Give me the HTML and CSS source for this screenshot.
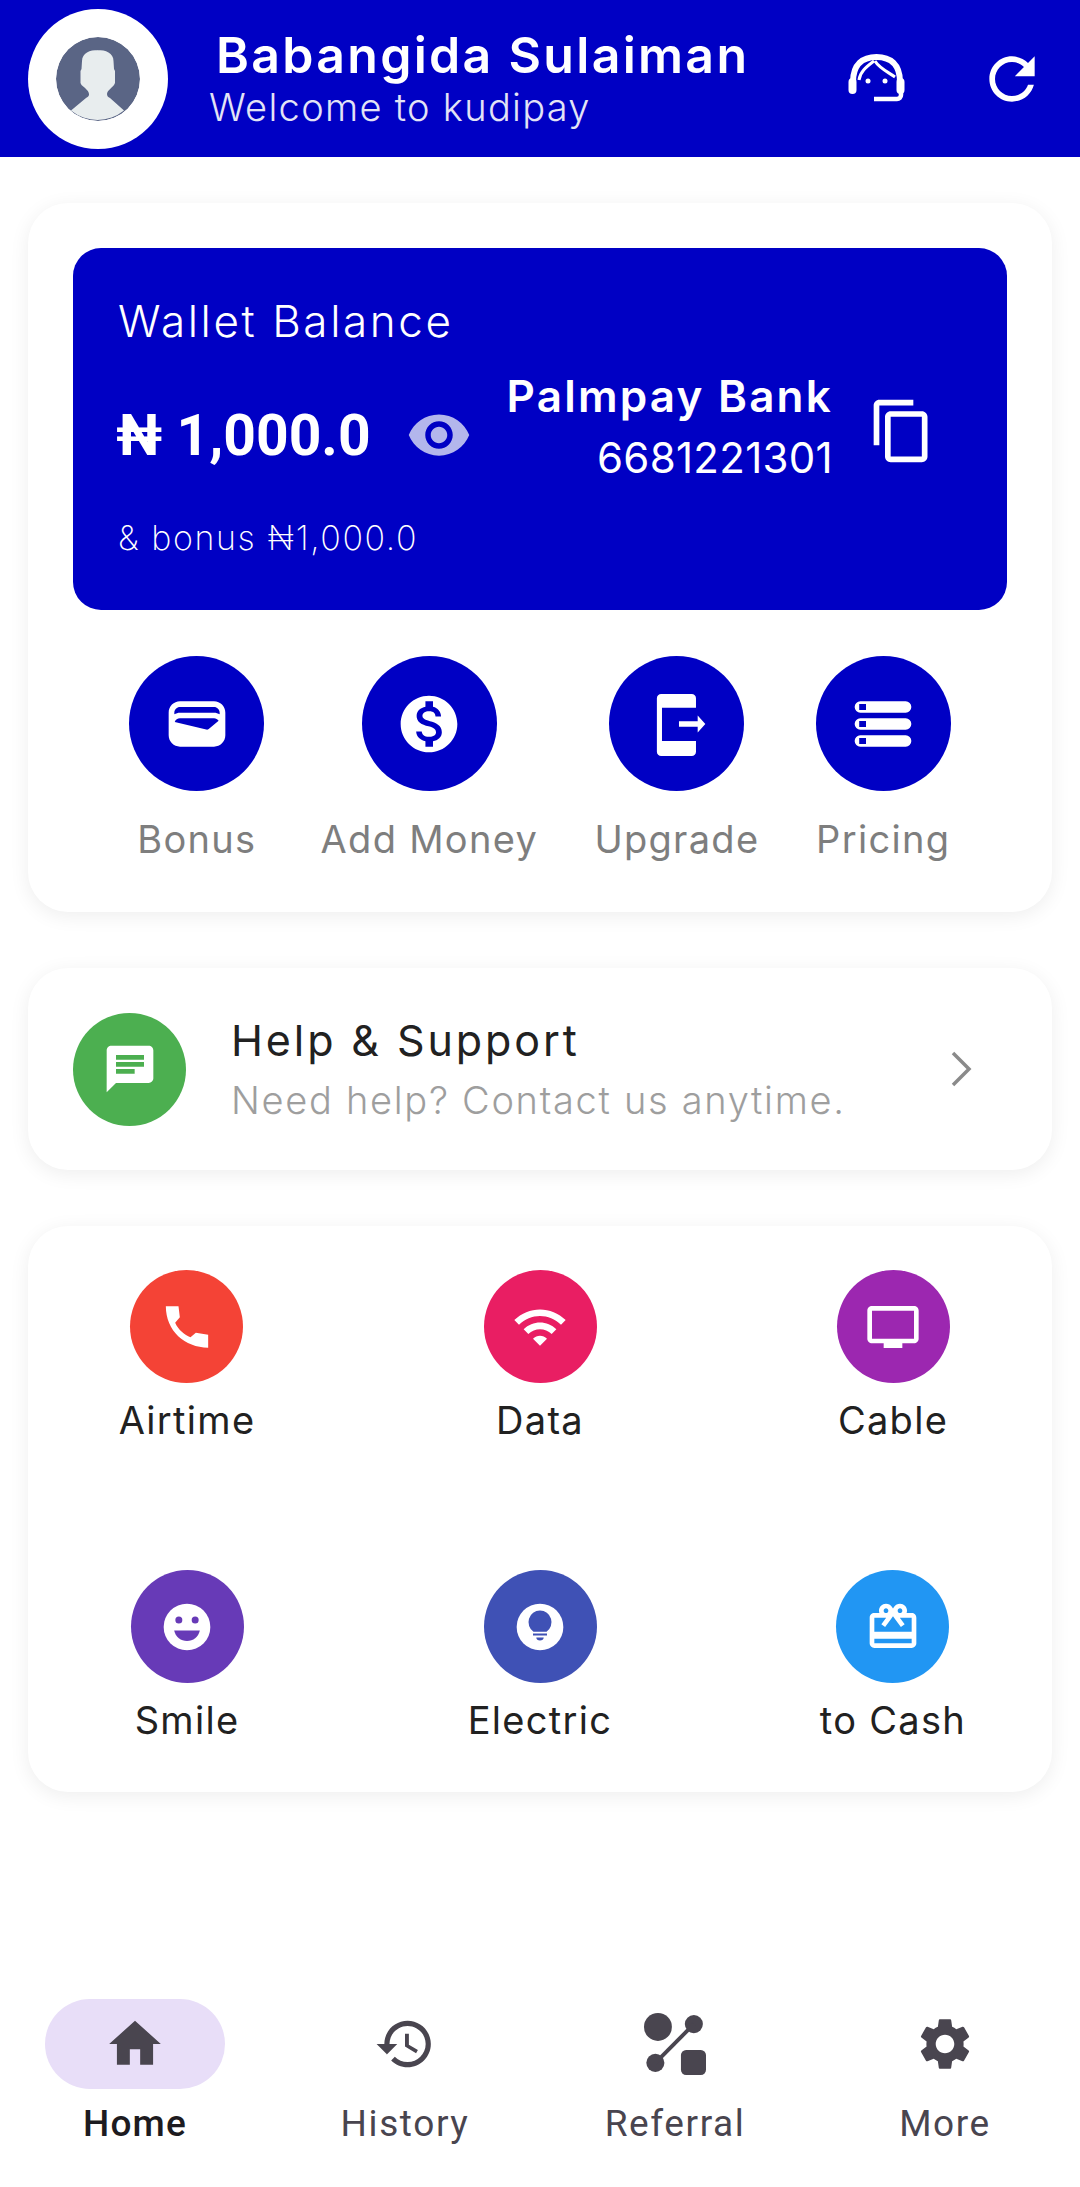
FILE: index.html
```html
<!DOCTYPE html>
<html lang="en">
<head>
    <meta charset="UTF-8">
    <meta name="viewport" content="width=device-width, initial-scale=1.0">
    <title>Kudipay</title>
    <link rel="stylesheet" href="styles.css">
</head>
<body>
    <header class="topbar">
        <div class="avatar">
            <svg viewBox="0 0 84 84" width="84" height="84">
                <circle cx="42" cy="42" r="42" fill="#5a6585"/>
                <path d="M42 13c-8 0-16 3-16 11l-.5 8-1 2v12l1 2c3 3 7 5 7.500 9 .3 2-1 3-3 4L15 73.500A42 42 0 0 0 68 73.500L54 61c-2-1-3-2-3-4 .5-4 5-6 7-9l1-2V34l-1-2-.5-8c0-8-8-11-16-11z" fill="#e8edee"/>
            </svg>
        </div>
        <div class="topbar-text">
            <div class="user-name">Babangida Sulaiman</div>
            <div class="welcome">Welcome to kudipay</div>
        </div>
        <svg class="top-icon agent" viewBox="0 0 100 80" fill="none" stroke="#fff">
            <path d="M23 42C23 24 33 17 46.500 17S70 24 70 42" stroke-width="6"/>
            <path d="M29 40C30 32 36 27 44 21M45 21C49 28 58 32 65 37" stroke-width="3"/>
            <rect x="18.500" y="38" width="8" height="16" rx="4" fill="#fff" stroke="none"/>
            <rect x="66.500" y="38" width="8" height="16" rx="4" fill="#fff" stroke="none"/>
            <path d="M71 52v3a4 4 0 0 1-4 4H44" stroke-width="4.500"/>
            <circle cx="38" cy="41" r="2.500" fill="#fff" stroke="none"/>
            <circle cx="55" cy="41" r="2.500" fill="#fff" stroke="none"/>
        </svg>
        <svg class="top-icon refresh" viewBox="0 0 24 24" fill="#fff"><path d="M17.650 6.350C16.200 4.900 14.210 4 12 4c-4.420 0-7.990 3.580-7.990 8s3.570 8 7.990 8c3.730 0 6.840-2.550 7.730-6h-2.080c-.82 2.330-3.040 4-5.650 4-3.310 0-6-2.690-6-6s2.690-6 6-6c1.660 0 3.140.69 4.220 1.780L13 11h7V4l-2.350 2.350z"/></svg>
    </header>

    <section class="card main-card">
        <div class="wallet">
            <div class="wallet-title">Wallet Balance</div>
            <div class="wallet-row">
                <div class="balance">₦ 1,000.0</div>
                <svg class="eye" viewBox="0 0 24 24" fill="#b3b6ec"><path d="M12 4.500C7 4.500 2.730 7.610 1 12c1.730 4.390 6 7.500 11 7.500s9.270-3.110 11-7.500c-1.730-4.390-6-7.500-11-7.500zM12 17c-2.760 0-5-2.240-5-5s2.240-5 5-5 5 2.240 5 5-2.240 5-5 5zm0-8c-1.660 0-3 1.340-3 3s1.340 3 3 3 3-1.340 3-3-1.340-3-3-3z"/></svg>
                <div class="bank">
                    <div class="bank-name">Palmpay Bank</div>
                    <div class="bank-number">6681221301</div>
                </div>
                <svg class="copy" viewBox="0 0 24 24" fill="#fff"><path d="M16 1H4c-1.100 0-2 .9-2 2v14h2V3h12V1zm3 4H8c-1.100 0-2 .9-2 2v14c0 1.100.9 2 2 2h11c1.100 0 2-.9 2-2V7c0-1.100-.9-2-2-2zm0 16H8V7h11v14z"/></svg>
            </div>
            <div class="wallet-bonus">&amp; bonus ₦1,000.0</div>
        </div>
        <div class="actions">
            <div class="action">
                <div class="action-circle"><svg viewBox="0 0 24 24" fill="#fff"><path d="M18 4H6C3.790 4 2 5.790 2 8v8c0 2.210 1.790 4 4 4h12c2.210 0 4-1.790 4-4V8c0-2.210-1.790-4-4-4zm-1.860 9.770c-.24.2-.57.28-.88.2L4.150 11.250C4.450 10.520 5.160 10 6 10h12c.67 0 1.260.34 1.630.84l-3.490 2.930zM6 6h12c1.100 0 2 .9 2 2v.55C19.410 8.210 18.730 8 18 8H6c-.73 0-1.410.21-2 .55V8c0-1.100.9-2 2-2z"/></svg></div>
                <span>Bonus</span>
            </div>
            <div class="action">
                <div class="action-circle"><svg viewBox="0 0 24 24" fill="#fff"><path d="M12 2C6.480 2 2 6.480 2 12s4.480 10 10 10 10-4.480 10-10S17.520 2 12 2zm1.410 16.090V20h-2.670v-1.930c-1.710-.36-3.160-1.460-3.270-3.400h1.960c.1 1.050.82 1.870 2.650 1.870 1.960 0 2.400-.98 2.400-1.590 0-.83-.44-1.610-2.670-2.140-2.480-.6-4.180-1.620-4.180-3.670 0-1.720 1.390-2.840 3.110-3.210V4h2.670v1.950c1.860.45 2.790 1.860 2.850 3.390H14.300c-.05-1.110-.64-1.870-2.220-1.870-1.500 0-2.400.68-2.400 1.640 0 .84.65 1.390 2.670 1.910s4.180 1.390 4.180 3.910c-.01 1.830-1.380 2.830-3.120 3.160z"/></svg></div>
                <span>Add Money</span>
            </div>
            <div class="action">
                <div class="action-circle"><svg viewBox="0 0 24 24" fill="#fff"><path d="M6.400 1.400h10.800a1.500 1.500 0 0 1 1.500 1.500v3.400H6.700V18h12v3.800a1.500 1.500 0 0 1-1.500 1.500H6.400a1.500 1.500 0 0 1-1.500-1.500V2.900a1.500 1.500 0 0 1 1.500-1.500z"/><path d="M12.700 11h6.600V9l2.700 3-2.700 3v-2h-6.600z"/></svg></div>
                <span>Upgrade</span>
            </div>
            <div class="action">
                <div class="action-circle"><svg viewBox="0 0 24 24" fill="#fff"><path fill-rule="evenodd" d="M4 4h16a2 2 0 0 1 0 4H4a2 2 0 0 1 0-4zM3.600 4.950v2.100H6v-2.100zM4 10h16a2 2 0 0 1 0 4H4a2 2 0 0 1 0-4zM3.600 10.950v2.100H6v-2.100zM4 16h16a2 2 0 0 1 0 4H4a2 2 0 0 1 0-4zM3.600 16.950v2.100H6v-2.100z"/></svg></div>
                <span>Pricing</span>
            </div>
        </div>
    </section>

    <section class="card help-card">
        <div class="help-icon"><svg viewBox="0 0 24 24" fill="#fff"><path d="M20 2H4c-1.100 0-1.990.9-1.990 2L2 22l4-4h14c1.100 0 2-.9 2-2V4c0-1.100-.9-2-2-2zm-6 12H6v-2h8v2zm4-3H6V9h12v2zm0-3H6V6h12v2z"/></svg></div>
        <div class="help-text">
            <div class="help-title">Help &amp; Support</div>
            <div class="help-sub">Need help? Contact us anytime.</div>
        </div>
        <svg class="chevron" viewBox="0 0 24 36" fill="none" stroke="#8a8a8a" stroke-width="3.500"><path d="M3 2l16 16L3 34"/></svg>
    </section>

    <section class="card services">
        <div class="service">
            <div class="service-circle red"><svg viewBox="87.500 86 168 168" fill="#fff"><path d="M108 108h38l4 33-14 16c10 22 28 36 46 44l16-14 37 6v39c-70 0-127-50-127-124z"/></svg></div>
            <span>Airtime</span>
        </div>
        <div class="service">
            <div class="service-circle pink"><svg viewBox="0 0 24 24" fill="#fff"><path d="M1 9l2 2c4.970-4.970 13.030-4.970 18 0l2-2C16.930 2.930 7.080 2.930 1 9zm8 8l3 3 3-3c-1.650-1.660-4.340-1.660-6 0zm-4-4l2 2c2.760-2.760 7.240-2.760 10 0l2-2C15.140 9.140 8.870 9.140 5 13z"/></svg></div>
            <span>Data</span>
        </div>
        <div class="service">
            <div class="service-circle purple"><svg viewBox="0 0 24 24" fill="#fff"><path d="M21 3H3c-1.100 0-2 .9-2 2v12c0 1.100.9 2 2 2h5v2h8v-2h5c1.100 0 1.990-.9 1.990-2L23 5c0-1.100-.9-2-2-2zm0 14H3V5h18v12z"/></svg></div>
            <span>Cable</span>
        </div>
        <div class="service">
            <div class="service-circle violet"><svg viewBox="0 0 24 24"><circle cx="12" cy="12" r="10" fill="#fff"/><circle cx="8.500" cy="9" r="1.500" fill="#673ab7"/><circle cx="15.500" cy="9" r="1.500" fill="#673ab7"/><path d="M6.500 13.500h11c-.6 2.800-2.900 4.500-5.500 4.500s-4.900-1.700-5.500-4.500z" fill="#673ab7"/></svg></div>
            <span>Smile</span>
        </div>
        <div class="service">
            <div class="service-circle indigo"><svg viewBox="0 0 24 24"><circle cx="12" cy="12" r="10" fill="#fff"/><path d="M12 4.900a5 5 0 0 0-2.800 9.100h5.600A5 5 0 0 0 12 4.900z" fill="#3f51b5"/><path d="M9 14.800h6v.8H9zM10.400 16.500h3.200c0 .8-.7 1.300-1.600 1.300s-1.600-.5-1.600-1.300z" fill="#3f51b5"/></svg></div>
            <span>Electric</span>
        </div>
        <div class="service">
            <div class="service-circle blue"><svg viewBox="0 0 24 24" fill="#fff"><path d="M20 6h-2.180c.11-.31.18-.65.18-1 0-1.660-1.340-3-3-3-1.050 0-1.960.54-2.500 1.350l-.5.67-.5-.68C10.960 2.540 10.050 2 9 2 7.340 2 6 3.340 6 5c0 .35.07.69.18 1H4c-1.110 0-1.990.89-1.990 2L2 19c0 1.110.89 2 2 2h16c1.110 0 2-.89 2-2V8c0-1.110-.89-2-2-2zm-5-2c.55 0 1 .45 1 1s-.45 1-1 1-1-.45-1-1 .45-1 1-1zM9 4c.55 0 1 .45 1 1s-.45 1-1 1-1-.45-1-1 .45-1 1-1zm11 15H4v-2h16v2zm0-5H4V8h5.080L7 10.830 8.620 12 11 8.760l1-1.360 1 1.360L15.380 12 17 10.830 14.920 8H20v6z"/></svg></div>
            <span>to Cash</span>
        </div>
    </section>

    <nav class="bottom-nav">
        <div class="nav-item active">
            <div class="nav-pill"><svg viewBox="0 0 24 24"><path d="M10 20v-6h4v6h5v-8h3L12 3 2 12h3v8z"/></svg></div>
            <span>Home</span>
        </div>
        <div class="nav-item">
            <div class="nav-pill"><svg viewBox="0 0 24 24"><path d="M13 3c-4.970 0-9 4.030-9 9H1l3.890 3.890.07.14L9 12H6c0-3.870 3.130-7 7-7s7 3.130 7 7-3.130 7-7 7c-1.930 0-3.680-.79-4.940-2.060l-1.420 1.420C8.270 19.990 10.510 21 13 21c4.970 0 9-4.030 9-9s-4.030-9-9-9zm-1 5v5l4.280 2.540.72-1.210-3.500-2.080V8H12z"/></svg></div>
            <span>History</span>
        </div>
        <div class="nav-item">
            <div class="nav-pill"><svg viewBox="0 0 24 24"><circle cx="5.400" cy="5.400" r="5.400"/><circle cx="19.300" cy="4.300" r="3.500"/><circle cx="4.400" cy="19.300" r="3.500"/><rect x="14.300" y="14.300" width="9.700" height="9.700" rx="2"/><path d="M4.400 19.300L19.300 4.300" stroke="#49454f" stroke-width="1.500"/></svg></div>
            <span>Referral</span>
        </div>
        <div class="nav-item">
            <div class="nav-pill"><svg viewBox="0 0 24 24"><path d="M19.140 12.940c.04-.3.06-.61.06-.94 0-.32-.02-.64-.07-.94l2.030-1.580c.18-.14.23-.41.12-.61l-1.920-3.320c-.12-.22-.37-.29-.59-.22l-2.390.96c-.5-.38-1.030-.7-1.620-.94l-.36-2.540c-.04-.24-.24-.41-.48-.41h-3.840c-.24 0-.43.17-.47.41l-.36 2.540c-.59.24-1.130.57-1.620.94l-2.390-.96c-.22-.08-.47 0-.59.22L2.740 8.870c-.12.21-.08.47.12.61l2.030 1.580c-.05.3-.09.63-.09.94s.02.64.07.94l-2.030 1.580c-.18.14-.23.41-.12.61l1.920 3.320c.12.22.37.29.59.22l2.390-.96c.5.38 1.030.7 1.620.94l.36 2.540c.05.24.24.41.48.41h3.840c.24 0 .44-.17.47-.41l.36-2.540c.59-.24 1.130-.56 1.620-.94l2.390.96c.22.08.47 0 .59-.22l1.920-3.320c.12-.22.07-.47-.12-.61l-2.010-1.580zM12 15.600c-1.980 0-3.600-1.620-3.600-3.600s1.620-3.600 3.600-3.600 3.600 1.620 3.600 3.600-1.620 3.600-3.600 3.600z"/></svg></div>
            <span>More</span>
        </div>
    </nav>
</body>
</html>
```

FILE: styles.css
```css
* {
    box-sizing: border-box;
}

body {
    margin: 0;
    width: 1080px;
    height: 2187px;
    background-color: #fff;
    font-family: "Inter", "Liberation Sans", sans-serif;
    display: flex;
    flex-direction: column;
    overflow: hidden;
}

.topbar {
    height: 157px;
    background-color: #0000c4;
    display: flex;
    align-items: center;
    padding: 0 28px;
    color: #fff;
}

.avatar {
    width: 140px;
    height: 140px;
    border-radius: 50%;
    background-color: #fff;
    display: flex;
    align-items: center;
    justify-content: center;
    flex-shrink: 0;
}

.avatar svg {
    border-radius: 50%;
}

.topbar-text {
    margin-left: 41px;
    flex: 1;
}

.user-name {
    font-size: 50px;
    font-weight: 600;
    line-height: 56px;
    margin-left: 7px;
    letter-spacing: 2.3px;
    white-space: nowrap;
}

.welcome {
    font-size: 38px;
    font-weight: 300;
    line-height: 48px;
    letter-spacing: 1.3px;
    color: #e3e3f6;
    white-space: nowrap;
}

.top-icon {
    flex-shrink: 0;
}

.agent {
    width: 100px;
    height: 80px;
    margin: 3px 48px 0 0;
}

.refresh {
    width: 68px;
    height: 68px;
    margin-right: 6px;
}

.card {
    margin: 0 28px;
    background-color: #fff;
    border-radius: 40px;
    box-shadow: 0 4px 20px rgba(0, 0, 0, 0.07);
}

.main-card {
    margin-top: 46px;
    height: 709px;
    padding: 45px;
}

.wallet {
    height: 362px;
    background-color: #0000c4;
    border-radius: 28px;
    padding: 46px 45px 0;
    color: #fff;
}

.wallet-title {
    font-size: 44px;
    font-weight: 300;
    line-height: 54px;
    letter-spacing: 2.6px;
}

.wallet-row {
    display: flex;
    align-items: center;
    margin-top: 18px;
}

.balance {
    font-family: "Roboto", sans-serif;
    font-size: 57px;
    font-weight: 700;
    width: 290px;
    margin: 14px 0 0 -2px;
    white-space: nowrap;
}

.eye {
    width: 66px;
    height: 66px;
    margin-top: 14px;
}

.bank {
    width: 361px;
    text-align: right;
}

.bank-name {
    font-size: 44px;
    font-weight: 600;
    line-height: 60px;
    letter-spacing: 2.2px;
    white-space: nowrap;
}

.bank-number {
    font-size: 42px;
    font-weight: 400;
    line-height: 64px;
    letter-spacing: 0.3px;
}

.copy {
    width: 68px;
    height: 68px;
    margin: 6px 0 0 35px;
}

.wallet-bonus {
    font-size: 34px;
    font-weight: 200;
    line-height: 44px;
    letter-spacing: 1.6px;
    margin-top: 26px;
}

.actions {
    display: flex;
    justify-content: space-evenly;
    margin-top: 46px;
}

.action {
    display: flex;
    flex-direction: column;
    align-items: center;
    font-size: 38px;
    letter-spacing: 1.3px;
    color: #7e7e7e;
    white-space: nowrap;
}

.action-circle {
    width: 135px;
    height: 135px;
    border-radius: 50%;
    background-color: #0000c4;
    display: flex;
    align-items: center;
    justify-content: center;
    margin-bottom: 25px;
}

.action-circle svg {
    width: 68px;
    height: 68px;
}

.help-card {
    margin-top: 56px;
    height: 202px;
    padding: 0 45px;
    display: flex;
    align-items: center;
}

.help-icon {
    width: 113px;
    height: 113px;
    border-radius: 50%;
    background-color: #4caf50;
    display: flex;
    align-items: center;
    justify-content: center;
    flex-shrink: 0;
}

.help-icon svg {
    width: 56px;
    height: 56px;
}

.help-text {
    margin: 3px 0 0 45px;
    flex: 1;
}

.help-title {
    font-size: 43px;
    font-weight: 400;
    color: #212121;
    line-height: 56px;
    letter-spacing: 2.9px;
    margin-bottom: 3px;
}

.help-sub {
    font-size: 38px;
    font-weight: 300;
    color: #9e9e9e;
    line-height: 58px;
    letter-spacing: 1.7px;
    white-space: nowrap;
}

.chevron {
    width: 24px;
    height: 36px;
    margin-right: 33px;
}

.services {
    margin-top: 56px;
    height: 566px;
    padding: 44px 43px 0;
    display: grid;
    grid-template-columns: repeat(3, 232px);
    grid-auto-rows: 300px;
    justify-content: space-between;
    justify-items: center;
}

.service {
    display: flex;
    flex-direction: column;
    align-items: center;
    font-size: 38px;
    letter-spacing: 1.3px;
    color: #212121;
    white-space: nowrap;
}

.service-circle {
    width: 113px;
    height: 113px;
    border-radius: 50%;
    display: flex;
    align-items: center;
    justify-content: center;
    margin-bottom: 14px;
}

.service-circle svg {
    width: 56px;
    height: 56px;
}

.red { background-color: #f44336; }
.pink { background-color: #e91e63; }
.purple { background-color: #9c27b0; }
.violet { background-color: #673ab7; }
.indigo { background-color: #3f51b5; }
.blue { background-color: #2196f3; }

.bottom-nav {
    margin-top: auto;
    height: 188px;
    display: grid;
    grid-template-columns: repeat(4, 1fr);
}

.nav-item {
    display: flex;
    flex-direction: column;
    align-items: center;
    font-family: "Roboto", sans-serif;
    font-size: 37px;
    font-weight: 400;
    color: #49454f;
    letter-spacing: 1.6px;
}

.nav-item.active {
    color: #1d1b20;
    font-weight: 500;
    letter-spacing: 1.2px;
}

.nav-pill {
    width: 180px;
    height: 90px;
    border-radius: 45px;
    display: flex;
    align-items: center;
    justify-content: center;
    margin-bottom: 13px;
}

.active .nav-pill {
    background-color: #e8def8;
}

.nav-pill svg {
    width: 62px;
    height: 62px;
    fill: #49454f;
}
```
